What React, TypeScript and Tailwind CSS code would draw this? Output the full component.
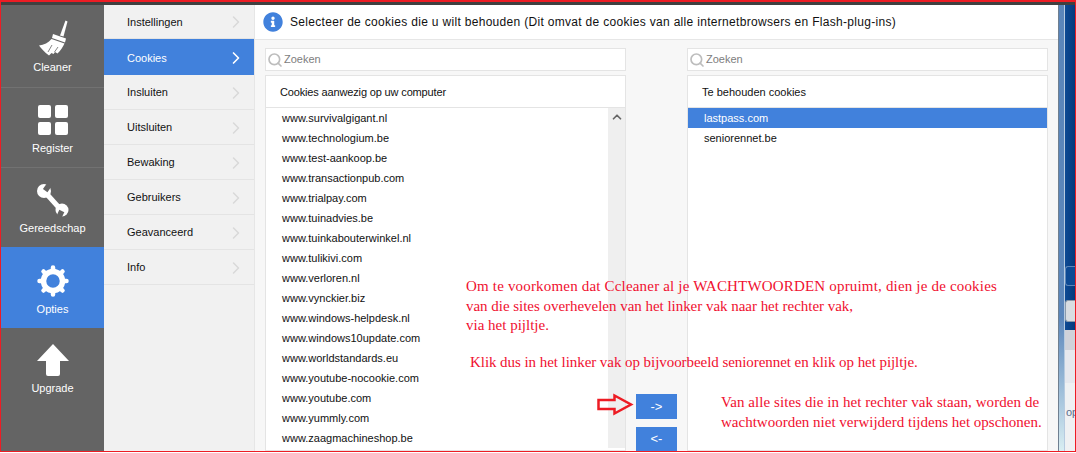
import { ChevronRight, ChevronUp, Search } from 'lucide-react';
import { FaInfoCircle } from 'react-icons/fa';

const menuItems = [
    { label: 'Instellingen', height: 'h-[34px]' },
    { label: 'Cookies', height: 'h-[36px]', active: true },
    { label: 'Insluiten', height: 'h-[35px]' },
    { label: 'Uitsluiten', height: 'h-[35px]' },
    { label: 'Bewaking', height: 'h-[35px]' },
    { label: 'Gebruikers', height: 'h-[35px]' },
    { label: 'Geavanceerd', height: 'h-[35px]' },
    { label: 'Info', height: 'h-[35px]' },
];

const computerCookies = [
    'www.survivalgigant.nl',
    'www.technologium.be',
    'www.test-aankoop.be',
    'www.transactionpub.com',
    'www.trialpay.com',
    'www.tuinadvies.be',
    'www.tuinkabouterwinkel.nl',
    'www.tulikivi.com',
    'www.verloren.nl',
    'www.vynckier.biz',
    'www.windows-helpdesk.nl',
    'www.windows10update.com',
    'www.worldstandards.eu',
    'www.youtube-nocookie.com',
    'www.youtube.com',
    'www.yummly.com',
    'www.zaagmachineshop.be',
];

function Broom() {
    return (
        <svg width="30" height="36" viewBox="0 0 30 36" fill="white">
            <path d="M27.5 0.5 L29.5 1.5 L25.5 16.5 L22 15.5 Z" />
            <path d="M15 14 L28 18.5 L27 22.5 L14 18 Z" />
            <path d="M13.5 19 L26.5 23.5 C25 27 22.5 30.5 19.5 33.5 L17 32 L15.5 34 L13.5 33 L11 35.5 C6.5 32 3 28.5 1 25.5 C6 25 10.5 22.5 13.5 19 Z" />
            <path d="M14 25 L10 32 M20 27 L16.5 32" stroke="#646464" strokeWidth="0.8" fill="none" />
        </svg>
    );
}

function Squares() {
    return (
        <div className="grid grid-cols-[13px_13px] gap-[4px]">
            <div className="h-[13px] rounded-[2px] bg-white" />
            <div className="h-[13px] rounded-[2px] bg-white" />
            <div className="h-[13px] rounded-[2px] bg-white" />
            <div className="h-[13px] rounded-[2px] bg-white" />
        </div>
    );
}

function Wrench() {
    return (
        <svg width="34" height="34" viewBox="0 0 34 34" fill="white">
            <path d="M8 8 L26 28" stroke="white" strokeWidth="5" />
            <circle cx="8" cy="8" r="7" />
            <circle cx="26" cy="27" r="6.5" />
            <rect x="6" y="-3" width="5.5" height="10" fill="#646464" transform="rotate(35 8 8)" />
            <rect x="23.5" y="28" width="5.5" height="10" fill="#646464" transform="rotate(25 26 27)" />
        </svg>
    );
}

function Gear() {
    return (
        <svg width="32" height="32" viewBox="0 0 32 32" fill="none" stroke="white">
            <circle cx="16" cy="16" r="9.5" strokeWidth="5.5" />
            <path
                d="M16 2.5 V6 M16 26 V29.5 M2.5 16 H6 M26 16 H29.5 M6.5 6.5 L9 9 M23 23 L25.5 25.5 M25.5 6.5 L23 9 M9 23 L6.5 25.5"
                strokeWidth="4.5"
                strokeLinecap="round"
            />
        </svg>
    );
}

function UpArrow() {
    return (
        <svg width="32" height="32" viewBox="0 0 32 32" fill="white">
            <path d="M16 0 L32 17 L23 17 L23 30 Q23 32 21 32 L11 32 Q9 32 9 30 L9 17 L0 17 Z" />
        </svg>
    );
}

function SearchBox() {
    return (
        <div className="flex h-[23px] items-center border border-[#e4e4e4] bg-white pl-[1px]">
            <Search size={16} strokeWidth={2.5} className="text-[#bdbdbd]" />
            <span className="ml-[1px] text-[#7d7d7d]">Zoeken</span>
        </div>
    );
}

function RightEdge() {
    return (
        <div className="flex w-[17px] shrink-0">
            <div className="w-px bg-[#6f7f90]" />
            <div className="w-[5px] bg-gradient-to-b from-[#5b86ba] via-[#5b86ba] via-[70%] to-[#d9eef2]" />
            <div className="w-px bg-[#b7cbe0]" />
            <div className="flex w-[10px] flex-col">
                <div className="h-[325px] bg-gradient-to-r from-[#0d4a94] to-[#063a7c] pt-[261px]">
                    <div className="h-[20px] rounded-l-[3px] border border-r-0 border-[#5c86b8] bg-[#0d4a94]" />
                    <div className="mt-[14px] h-[22px] rounded-l-[3px] border border-r-0 border-[#8a9aac] bg-[#d8dde2]" />
                </div>
                <div className="h-[20px] bg-[#cfd2da]" />
                <div className="h-[33px] bg-[#e6e8ee]" />
                <div className="flex-1 overflow-hidden bg-[#eff1f3] pl-[1px] pt-[21px] text-[#5c6f8c]">op</div>
            </div>
        </div>
    );
}

export default function App() {
    return (
        <div className="relative h-[453px] w-[1076px] overflow-hidden bg-white font-['Liberation_Sans',sans-serif] text-[11px] text-[#111]">
            <div className="flex h-[452px] flex-col border-x border-b border-t-2 border-[#ed1c24]">
                <div className="h-[3px] shrink-0 bg-[#404040]" />
                <div className="flex min-h-0 flex-1">
                    <div className="flex w-[103px] shrink-0 flex-col bg-[#646464] text-white">
                        <div className="flex h-[83px] flex-col items-center border-b border-[#727272] pt-[15px]">
                            <Broom />
                            <span className="mt-[3px] leading-4">Cleaner</span>
                        </div>
                        <div className="flex h-[80px] flex-col items-center border-b border-[#727272] pt-[17px]">
                            <Squares />
                            <span className="mt-[5px] leading-4">Register</span>
                        </div>
                        <div className="flex h-[79px] flex-col items-center pt-[15px]">
                            <Wrench />
                            <span className="mt-[3px] leading-4">Gereedschap</span>
                        </div>
                        <div className="flex h-[81px] flex-col items-center bg-[#4181dc] pt-[18px]">
                            <Gear />
                            <span className="mt-[4px] leading-4">Opties</span>
                        </div>
                        <div className="flex flex-1 flex-col items-center pt-[16px]">
                            <UpArrow />
                            <span className="mt-[4px] leading-4">Upgrade</span>
                        </div>
                    </div>

                    <div className="w-[150px] shrink-0 bg-[#f1f1f1]">
                        {menuItems.map((item) => (
                            <div
                                key={item.label}
                                className={`flex items-center justify-between pl-[23px] pr-[8px] ${item.height} ${
                                    item.active ? 'bg-[#4181dc] pt-[2px] text-white' : 'border-b border-[#e4e4e4] pt-[1px]'
                                }`}
                            >
                                <span>{item.label}</span>
                                <ChevronRight size={20} strokeWidth={item.active ? 2 : 1.75} className={item.active ? 'text-white' : 'text-[#d8d8d8]'} />
                            </div>
                        ))}
                    </div>

                    <div className="w-px shrink-0 bg-[#e6e6e6]" />

                    <div className="flex min-w-0 flex-1 flex-col">
                        <div className="flex h-[35px] shrink-0 items-center gap-[7px] border-b border-[#e6e6e6] bg-white pl-[8px]">
                            <FaInfoCircle size={20} className="text-[#4181dc]" />
                            <span className="text-[12px] tracking-[0.31px]">
                                Selecteer de cookies die u wilt behouden (Dit omvat de cookies van alle internetbrowsers en Flash-plug-ins)
                            </span>
                        </div>
                        <div className="flex min-h-0 flex-1 gap-[61px] overflow-hidden bg-[#f7f7f7] pl-[10px] pt-[8px]">
                            <div className="flex w-[361px] shrink-0 flex-col gap-[4px]">
                                <SearchBox />
                                <div className="flex-1 border border-[#e4e4e4] bg-white">
                                    <div className="flex h-[32px] items-center border-b border-[#e4e4e4] pl-[14px] pt-[1px] tracking-[-0.15px]">Cookies aanwezig op uw computer</div>
                                    <div className="flex">
                                        <div className="min-w-0 flex-1 pl-[16px]">
                                            {computerCookies.map((site) => (
                                                <div key={site} className="h-[20px] leading-[20px]">{site}</div>
                                            ))}
                                        </div>
                                        <div className="flex w-[17px] shrink-0 justify-center bg-[#efefef] pt-[1px]">
                                            <ChevronUp size={14} strokeWidth={3} className="mt-[1px] text-[#666]" />
                                        </div>
                                    </div>
                                </div>
                            </div>

                            <div className="flex w-[361px] shrink-0 flex-col gap-[4px]">
                                <SearchBox />
                                <div className="flex-1 border border-[#e4e4e4] bg-white">
                                    <div className="flex h-[32px] items-center border-b border-[#e4e4e4] pl-[14px] pt-[1px]">Te behouden cookies</div>
                                    <div className="h-[20px] bg-[#4181dc] pl-[16px] leading-[20px] text-white">lastpass.com</div>
                                    <div className="h-[20px] pl-[16px] leading-[20px]">seniorennet.be</div>
                                </div>
                            </div>
                        </div>
                    </div>

                    <RightEdge />
                </div>
            </div>

            {/* arrow buttons and the red notes pasted over the window */}
            <div className="absolute left-[636px] top-[394px] flex h-[25px] w-[41px] items-center justify-center bg-[#4181dc] text-[13px] text-white">-&gt;</div>
            <div className="absolute left-[636px] top-[427px] flex h-[24px] w-[41px] items-center justify-center bg-[#4181dc] text-[13px] text-white">&lt;-</div>

            <svg className="absolute left-[596px] top-[392px]" width="40" height="26" viewBox="0 0 40 26" fill="none" stroke="#ed1c24" strokeWidth="2.5">
                <path d="M2.5 8 L18.5 8 L18.5 3.5 L35 12.5 L18.5 21.5 L18.5 17 L2.5 17 Z" />
            </svg>

            <div className="absolute left-[466px] top-[277px] whitespace-nowrap font-['Liberation_Serif',serif] text-[15px] leading-[19.5px] text-[#f01030]">
                <div className="tracking-[0.18px]">Om te voorkomen dat Ccleaner al je WACHTWOORDEN opruimt, dien je de cookies</div>
                <div className="tracking-[-0.03px]">van die sites overhevelen van het linker vak naar het rechter vak,</div>
                <div>via het pijltje.</div>
                <div className="ml-[4px] mt-[17px] tracking-[-0.06px]">Klik dus in het linker vak op bijvoorbeeld seniorennet en klik op het pijltje.</div>
            </div>
            <div className="absolute left-[721px] top-[393px] whitespace-nowrap font-['Liberation_Serif',serif] text-[15px] leading-[19.5px] text-[#f01030]">
                <div className="tracking-[0.07px]">Van alle sites die in het rechter vak staan, worden de</div>
                <div>wachtwoorden niet verwijderd tijdens het opschonen.</div>
            </div>
        </div>
    );
}
